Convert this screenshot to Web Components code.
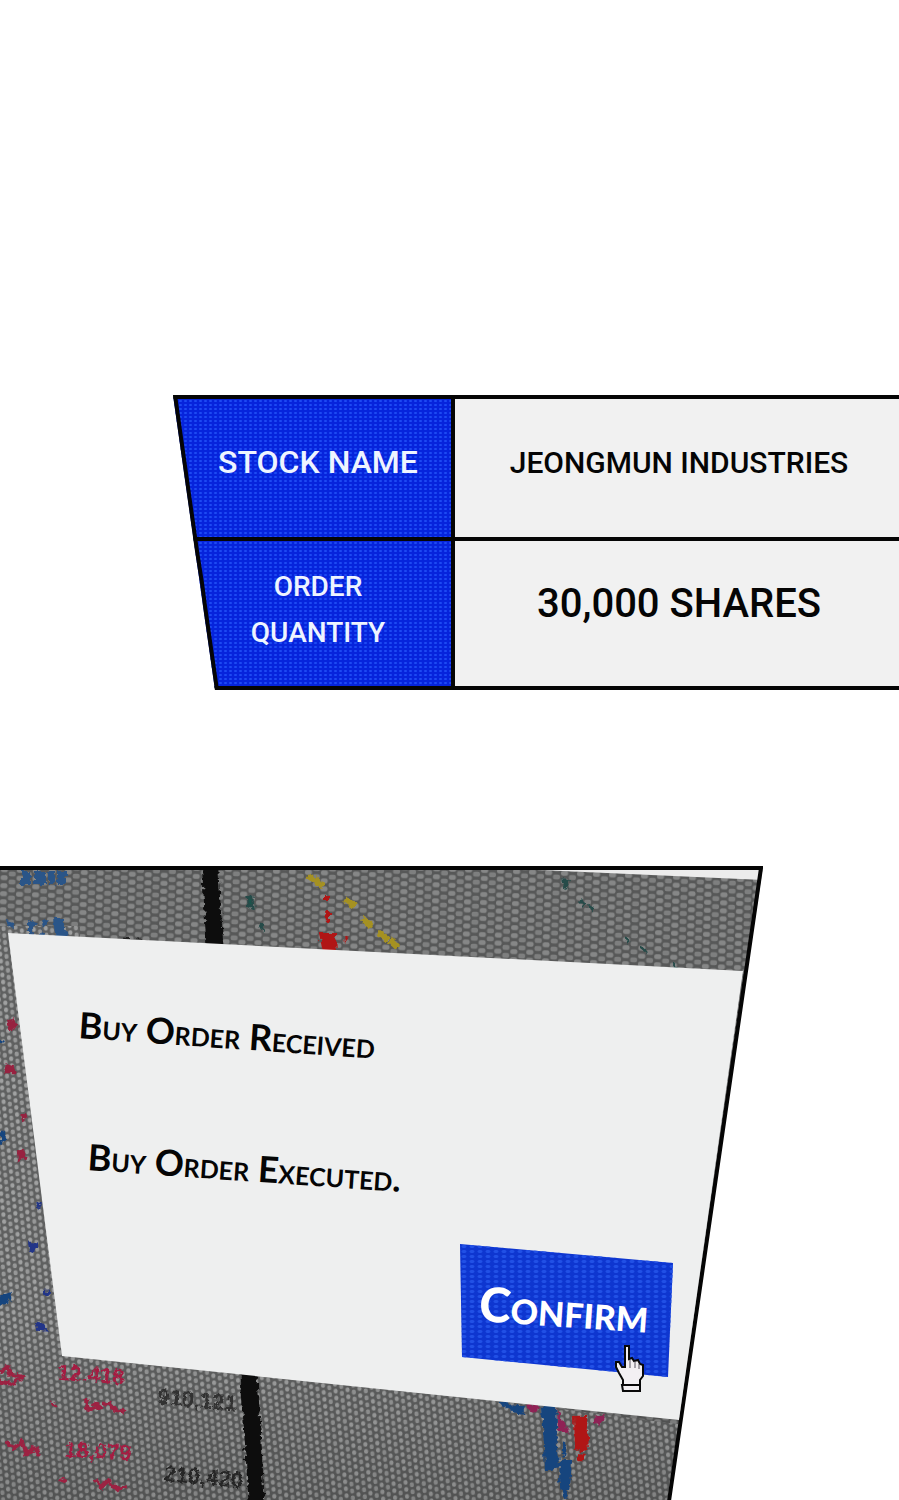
<!DOCTYPE html>
<html lang="en">
<head>
<meta charset="utf-8">
<meta name="viewport" content="width=device-width, initial-scale=1">
<title>Buy order</title>
<style>
  body { margin: 0; background: #fff; color: #050505; font-family: Roboto, "Liberation Sans", sans-serif; }
</style>
</head>
<body>
<trade-page>
  <order-summary></order-summary>
  <trade-screen>
    <order-dialog>
      <span slot="received">Buy Order Received</span>
      <span slot="executed">Buy Order Executed.</span>
      <confirm-button slot="action">Confirm</confirm-button>
    </order-dialog>
  </trade-screen>
</trade-page>
<script>
const component = (name, html) => customElements.define(name, class extends HTMLElement {
  constructor() {
    super();
    this.attachShadow({ mode: "open" }).innerHTML = html;
  }
});

component("trade-page", `
<style>
  :host { display: flex; flex-direction: column; gap: 176px; padding-top: 395px; overflow: hidden; }
</style>
<slot></slot>`);

component("order-summary", `
<style>
  :host { display: block; position: relative; margin-left: 173px; }
  .clip { clip-path: polygon(0 0, 100% 0, 100% 100%, 42px 100%); }
  table { width: 100%; table-layout: fixed; border-collapse: collapse; background: #f1f1f1; }
  tr { border-top: 4px solid #050505; border-bottom: 4px solid #050505; }
  th, td { box-sizing: border-box; height: 142px; padding: 0 8px 12px; text-align: center; font-weight: 500; }
  tr + tr > * { height: 149px; }
  th { width: 280px; border-right: 4px solid #050505; color: #eef4ff; font-size: 32px; line-height: 46px; padding-left: 20px;
    background: #0624dc radial-gradient(ellipse 2px 1px at 50% 50%, #1d4af4 60%, transparent) 0 0 / 5px 4px; }
  tr + tr > th { font-size: 28px; padding: 0 64px 8px 76px; }
  td { font-size: 30px; padding-right: 4px; }
  tr + tr > td { font-size: 40px; padding-bottom: 20px; }
  svg { position: absolute; left: 0; top: 0; width: 46px; height: 100%; }
</style>
<div class="clip">
  <table>
    <tr><th scope="row">STOCK NAME</th><td>JEONGMUN INDUSTRIES</td></tr>
    <tr><th scope="row">ORDER QUANTITY</th><td>30,000 SHARES</td></tr>
  </table>
</div>
<svg viewBox="0 0 46 295" preserveAspectRatio="none" aria-hidden="true"><path d="M2 0 L24 156 L29 188 L32 211 L44 295" fill="none" stroke="#050505" stroke-width="4"/></svg>`);

component("trade-screen", `
<style>
  :host { display: block; position: relative; margin-right: 136px; }
  .scene { position: absolute; inset: 0; width: 100%; height: 100%; }
  .content { position: relative; padding: 67px 20px 81px 8px; }
</style>
<svg class="scene" viewBox="0 0 763 634" preserveAspectRatio="none">
  <defs>
    <pattern id="weave" width="16" height="8" patternUnits="userSpaceOnUse" patternTransform="rotate(2)">
      <rect width="16" height="8" fill="#575858"/>
      <rect x="1" y="1" width="7" height="5" rx="2" fill="#868787"/>
      <rect x="9" y="-3" width="7" height="5" rx="2" fill="#7e7f7f"/>
      <rect x="9" y="5" width="7" height="5" rx="2" fill="#7e7f7f"/>
    </pattern>
    <pattern id="fine" width="12" height="7" patternUnits="userSpaceOnUse" patternTransform="rotate(-6)">
      <rect width="12" height="7" fill="#5f6060"/>
      <rect x="1" y="1" width="4" height="5" rx="2" fill="#a0a1a1"/>
      <rect x="7" y="-3" width="4" height="5" rx="2" fill="#979898"/>
      <rect x="7" y="4" width="4" height="5" rx="2" fill="#979898"/>
    </pattern>
    <linearGradient id="shade" x1="0" x2="0" y1="0" y2="1"><stop offset=".7" stop-opacity="0"/><stop offset="1" stop-opacity=".14"/></linearGradient>
    <clipPath id="frame"><path d="M0 0H763L667 634H0Z"/></clipPath>
    <filter id="rough" x="-5%" y="-5%" width="110%" height="110%"><feTurbulence type="fractalNoise" baseFrequency=".2" numOctaves="2" seed="4"/><feDisplacementMap in="SourceGraphic" scale="7" xChannelSelector="R" yChannelSelector="G"/></filter>
    <filter id="worn" x="-5%" y="-5%" width="110%" height="110%"><feTurbulence type="fractalNoise" baseFrequency=".3" numOctaves="2" seed="9"/><feDisplacementMap in="SourceGraphic" scale="5" xChannelSelector="R" yChannelSelector="G"/></filter>
  </defs>
  <g clip-path="url(#frame)">
    <path d="M0 0H763V634H0Z" fill="url(#weave)"/>
    <path d="M0 60H80V480L700 560V634H0Z" fill="url(#fine)"/>
    <path d="M0 0H763V634H0Z" fill="url(#shade)"/>
    <path d="M540 4L763 14V0Z" fill="#ececec"/>
    <g filter="url(#rough)">
      <path d="M202 0H218L224 90H207ZM240 500H257L265 640H249Z" fill="#080808"/>
      <path d="M21 5H31V19H21ZM34 5H46V18H34ZM49 5H55V19H49ZM58 5H66V19H58ZM53 52H64V62L71 75H56ZM28 54l9 3-5 7 5 11-9-1ZM44 53l5 2-8 9 5 11-7-4ZM7 54l6 2 1 7-5-2Z" fill="#2b5488"/>
      <path d="M319 67H336L337 92H324ZM325 45h5v12h-4ZM324 30h6v4h-6ZM344 70l5 2-4 6ZM574 549h13l2 34-14 2ZM577 587l8 1-4 7-4-2Z" fill="#b01919"/>
      <path d="M6 155l8-3 3 10-8 3ZM7 198l7 2 2 8H4ZM20 247l7 2-3 6ZM18 284l5-4 4 12-8 3Z" fill="#97213f"/>
      <path d="M308 10l7 4 8 7M345 33l10 7M362 52l10 8M378 66l10 8M390 74l8 8" stroke="#a59122" stroke-width="6" fill="none"/>
      <path d="M563 15h5l-2 6ZM247 31h5l1 10-5-3ZM260 58l5 9M580 35l4 4M588 40l5 3M625 70l4 7M641 81l5 4M673 98l5 8" fill="#1c554c" stroke="#274c4a" stroke-width="3"/>
      <path d="M542 539h14l3 61-14 4ZM560 593h12l-2 27-5 13-6-18ZM498 535h10l5 4h12l-2 8-12-2ZM562 574l5 2-2 15-3-3ZM0 430l12-4-4 11-8 3ZM0 268l5-4 1 10-6 3ZM0 172l5 3-5 4Z" fill="#19457e"/>
      <path d="M28 375l10 2-4 10-5-2ZM36 455l8 1 5 9-12-1ZM36 337h5l-2 6ZM43 424h7v4h-7Z" fill="#243688"/>
      <path d="M557 541l8 18 6 9-13-5ZM594 550l11-3-6 13-5-3ZM528 538h11l-2 8-7-2Z" fill="#8f2454"/>
      <path d="M0 505l8-5 2 8 12 2-9 7-13-2M6 576l8 5 8-6 4 12 10-6 4 8M50 535l8 5M59 612l8 3M86 533l2 10 11-3-6-4M104 537h7l4 6 10 2M94 612l8 8 6-7 9 9 10-2" fill="none" stroke="#9c2243" stroke-width="4"/>
      <path d="M124 73l18 1 6 4M158 79l12 2M180 79h10" fill="none" stroke="#242424" stroke-width="3"/>
    </g>
    <g filter="url(#worn)" font-family="Liberation Sans, sans-serif" font-size="22" font-weight="700">
      <text x="57" y="513" fill="#a51f43" transform="rotate(4 57 513)">12.418</text>
      <text x="64" y="590" fill="#a51f43" transform="rotate(3 64 590)">18,079</text>
      <text x="157" y="537" fill="#303030" transform="rotate(5 157 537)">910,121</text>
      <text x="163" y="614" fill="#262626" transform="rotate(5 163 614)">210,420</text>
    </g>
  </g>
  <path d="M0 2H761L669 634" fill="none" stroke="#050505" stroke-width="4"/>
</svg>
<div class="content"><slot></slot></div>`);

component("order-dialog", `
<style>
  :host { display: flex; flex-direction: column; align-items: flex-start; padding: 69px 70px 43px 71px; background: #eeefef;
    clip-path: polygon(0 0, 100% 38px, calc(100% - 64px) 100%, 54px calc(100% - 64px)); }
  p { margin: 0; font: 700 36px/44px Lato, "Liberation Sans", sans-serif; font-variant: small-caps; white-space: nowrap; transform: rotate(4deg); transform-origin: left center; }
  .received { margin-bottom: 88px; }
  .executed { margin: 0 0 66px 9px; }
  .action { align-self: flex-end; }
</style>
<p class="received"><slot name="received"></slot></p>
<p class="executed"><slot name="executed"></slot></p>
<div class="action"><slot name="action"></slot></div>`);

component("confirm-button", `
<style>
  :host { display: block; position: relative; }
  button { display: block; width: 213px; height: 133px; margin: 0; border: 0; padding: 0 5px 4px 0; color: #fff; cursor: pointer;
    font: 900 48px/60px Lato, "Liberation Sans", sans-serif; font-variant: small-caps;
    background: #0e36d0 radial-gradient(ellipse 3px 2px at 50% 50%, #2150e6 60%, transparent) 0 0 / 8px 5px;
    clip-path: polygon(0 0, 100% 19px, calc(100% - 5px) 100%, 2px calc(100% - 20px)); }
  span { display: block; transform: rotate(4deg); }
  svg { position: absolute; right: 28px; bottom: -16px; width: 31px; height: 49px; }
</style>
<button type="button"><span><slot></slot></span></button>
<svg viewBox="0 0 31 49" aria-hidden="true">
  <path d="M11 2H15V15L18 14L20 17L24 16L26 20L29 21V32L26 36V41H9V36L5 29L2 23V18H5L8 23H11Z" fill="#f3f0f3" stroke="#090909" stroke-width="2"/>
  <path d="M8 41H26V47H9Z" fill="#f3f0f3" stroke="#090909" stroke-width="2"/>
  <path d="M16 16V24M21 17V24M25 20V25" stroke="#54515a"/>
</svg>`);
</script>
</body>
</html>
